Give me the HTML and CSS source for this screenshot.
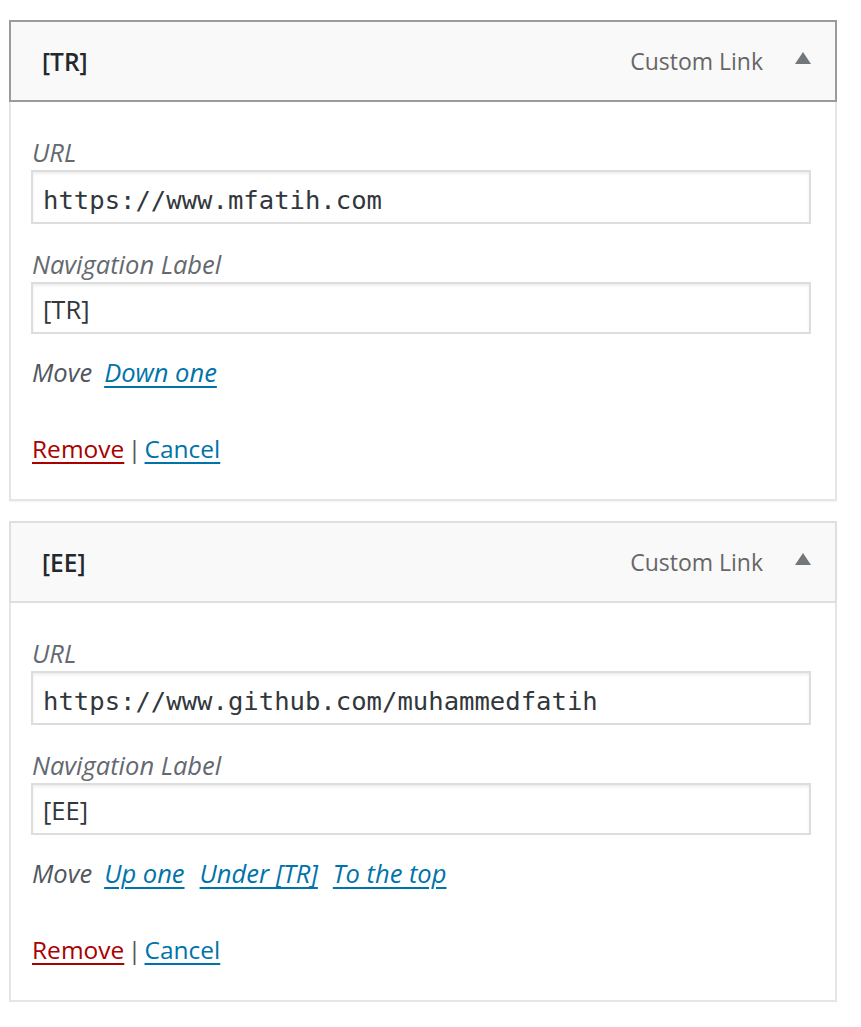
FILE: index.html
```html
<!DOCTYPE html>
<html>
<head>
<meta charset="utf-8">
<link rel="stylesheet" href="styles.css">
</head>
<body>
<div class="menu">
  <div class="item">
    <div class="handle active">
      <span class="title">[TR]</span>
      <span class="controls">
        <span class="type">Custom Link</span>
        <svg class="arrow" width="16" height="12" viewBox="0 0 16 12"><path d="M8 0 L16 12 L0 12 Z" fill="#72777c"/></svg>
      </span>
    </div>
    <div class="settings">
      <label class="label">URL</label>
      <div class="input code url">https://www.mfatih.com</div>
      <label class="label label-2">Navigation Label</label>
      <div class="input text">[TR]</div>
      <div class="move"><span class="move-word">Move</span><a class="link">Down one</a></div>
      <div class="actions"><a class="remove">Remove</a> <span class="sep">|</span> <a class="link">Cancel</a></div>
    </div>
  </div>
  <div class="item">
    <div class="handle">
      <span class="title">[EE]</span>
      <span class="controls">
        <span class="type">Custom Link</span>
        <svg class="arrow" width="16" height="12" viewBox="0 0 16 12"><path d="M8 0 L16 12 L0 12 Z" fill="#72777c"/></svg>
      </span>
    </div>
    <div class="settings">
      <label class="label">URL</label>
      <div class="input code url">https://www.github.com/muhammedfatih</div>
      <label class="label label-2">Navigation Label</label>
      <div class="input text">[EE]</div>
      <div class="move"><span class="move-word">Move</span><a class="link">Up one</a><a class="link">Under [TR]</a><a class="link">To the top</a></div>
      <div class="actions"><a class="remove">Remove</a> <span class="sep">|</span> <a class="link">Cancel</a></div>
    </div>
  </div>
</div>
</body>
</html>
```

FILE: styles.css
```css
html, body {
  margin: 0;
  padding: 0;
  background: #ffffff;
}

body {
  font-family: "Open Sans", "Noto Sans", sans-serif;
  color: #444444;
}

.menu {
  padding: 20px 0 0 9px;
  width: 828px;
  display: flex;
  flex-direction: column;
  gap: 20px;
}

.item {
  display: flex;
  flex-direction: column;
}

.handle {
  height: 78px;
  border: 2px solid #dfdfdf;
  background: #f9f9f9;
  display: flex;
  align-items: center;
  justify-content: space-between;
  padding: 0 24px 0 31px;
}

.handle.active {
  border-color: #9b9b9b;
}

.title {
  font-size: 24.5px;
  font-weight: 600;
  color: #23282d;
}

.controls {
  display: flex;
  align-items: center;
  gap: 32px;
}

.type {
  font-size: 23px;
  color: #666666;
}

.arrow {
  display: block;
  margin-top: -7px;
}

.settings {
  border: 2px solid #e5e5e5;
  border-top: none;
  padding: 34px 24px 34px 20px;
  display: flex;
  flex-direction: column;
  box-shadow: 0 1px 1px rgba(0, 0, 0, 0.04);
}

.label {
  font-size: 25.5px;
  font-style: italic;
  line-height: 32px;
  color: #646970;
  padding-left: 1px;
}

.label-2 {
  margin-top: 24px;
}

.input {
  box-sizing: border-box;
  width: 780px;
  border: 2px solid #dddddd;
  box-shadow: inset 0 2px 3px rgba(0, 0, 0, 0.07);
  background: #ffffff;
  color: #32373c;
  display: flex;
  align-items: center;
  padding: 0 10px;
}

.input.code {
  height: 54px;
  margin-top: 2px;
  padding-top: 6px;
  font-family: "DejaVu Sans Mono", monospace;
  font-size: 25.6px;
}

.input.text {
  height: 52px;
  margin-top: 2px;
  padding-top: 2px;
  font-size: 25.5px;
}

.move {
  margin-top: 22px;
  line-height: 32px;
  font-size: 25.5px;
  font-style: italic;
  display: flex;
  gap: 15px;
  padding-left: 1px;
}

.move-word {
  color: #50575e;
  margin-right: -3px;
}

.link {
  color: #0073aa;
  text-decoration: underline;
  text-decoration-thickness: 2px;
  text-underline-offset: 4px;
}

.actions {
  margin-top: 45px;
  line-height: 32px;
  font-size: 24.5px;
  padding-left: 1px;
  word-spacing: -3px;
}

.remove {
  color: #aa0000;
  text-decoration: underline;
  text-decoration-thickness: 2px;
  text-underline-offset: 4px;
}

.sep {
  color: #555555;
}
```
